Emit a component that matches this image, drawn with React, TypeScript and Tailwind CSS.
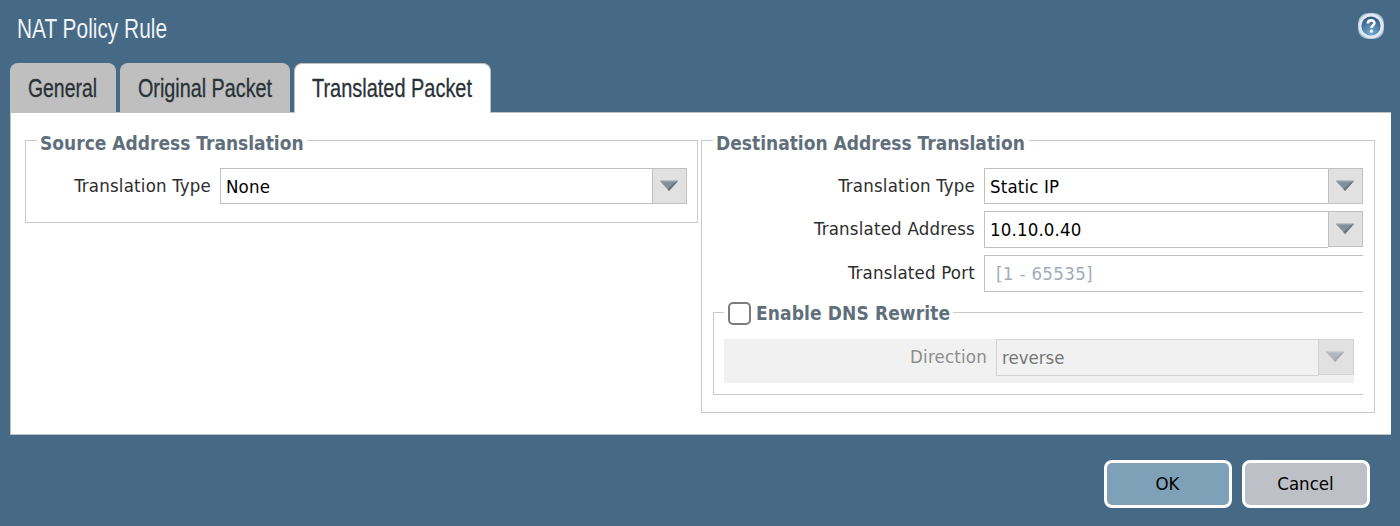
import type { ReactNode } from "react";

function Arrow({ disabled = false }: { disabled?: boolean }) {
  return (
    <svg width="20" height="12" viewBox="0 0 20 12" className={disabled ? "opacity-50" : ""}>
      <path d="M1 1h18l-9 10z" fill="#85919a" />
      <path d="M19 1l-9 10-1.5-2L17 1z" fill="#697680" />
      <path d="M1 1h18" stroke="#a0abb2" strokeWidth="1.2" />
    </svg>
  );
}

function Label({ children, className }: { children: ReactNode; className: string }) {
  return (
    <span className={`shrink-0 whitespace-nowrap text-right text-[18.5px] leading-[35px] tracking-[0.2px] ${className}`}>
      {children}
    </span>
  );
}

function Legend({ children, className }: { children: ReactNode; className: string }) {
  return (
    <legend className={`h-[21px] whitespace-nowrap pl-[3px] text-[19px] font-bold leading-[26px] text-[#5f6f7b] ${className}`}>
      {children}
    </legend>
  );
}

function Select({ value, height, disabled = false }: { value: string; height: string; disabled?: boolean }) {
  return (
    <div className={`flex min-w-0 flex-1 items-start ${height}`}>
      <div
        className={`h-full min-w-0 flex-1 border border-r-0 pl-[5px] text-[18.5px] leading-[36px] ${
          disabled ? "border-[#d2d2d2] text-[#767676]" : "border-[#c0c0c0] tracking-[0.15px] text-black"
        }`}
      >
        {value}
      </div>
      <div
        className={`flex h-9 shrink-0 items-center justify-center border bg-[#e1e1e1] ${
          disabled ? "w-9 border-[#d2d2d2] pr-0.5" : "w-[35px] border-[#c0c0c0] pr-px"
        }`}
      >
        <Arrow disabled={disabled} />
      </div>
    </div>
  );
}

function Tab({ label, width, textWidth, active = false }: { label: string; width: string; textWidth: string; active?: boolean }) {
  return (
    <div
      className={`flex shrink-0 items-center justify-center rounded-t-lg border border-b-0 border-[#c0c0c0] pr-px ${width} ${
        active ? "h-[50px] bg-white" : "h-[49px] bg-[#bfbfbf] pt-px"
      }`}
    >
      <svg height="34" className={`overflow-visible ${textWidth}`}>
        <text
          x="0"
          y="25"
          textLength="100%"
          lengthAdjust="spacingAndGlyphs"
          className="fill-[#293237] stroke-[#293237] stroke-[0.3px] font-['Liberation_Sans_Narrow','Liberation_Sans',sans-serif] text-[25.5px]"
        >
          {label}
        </text>
      </svg>
    </div>
  );
}

export default function App() {
  return (
    <div className="flex h-[526px] w-[1400px] flex-col overflow-hidden bg-[#466985] font-['DejaVu_Sans_Condensed','DejaVu_Sans',sans-serif] text-[#2d2d2d]">
      <header className="flex h-[63px] shrink-0 items-start justify-between pl-[17px] pr-4 pt-[13px]">
        <svg width="150" height="36" className="overflow-visible">
          <text
            x="0"
            y="25"
            textLength="150"
            lengthAdjust="spacingAndGlyphs"
            className="fill-[#f0f3f6] font-['Liberation_Sans_Narrow','Liberation_Sans',sans-serif] text-[27px]"
          >
            NAT Policy Rule
          </text>
        </svg>
        <svg width="26" height="26" viewBox="0 0 26 26" aria-label="Help">
          <defs>
            <radialGradient id="help" cx="50%" cy="85%" r="85%">
              <stop offset="0" stopColor="#78aed5" />
              <stop offset="1" stopColor="#285681" />
            </radialGradient>
          </defs>
          <rect width="26" height="26" rx="10" fill="#a9bdd3" />
          <circle cx="13" cy="13" r="12.5" fill="#e0e8f5" />
          <circle cx="13" cy="13" r="9.6" fill="url(#help)" />
          <path d="M9.8 10.4c0-4 6.6-4 6.6-.4 0 2.4-3 2.4-3 5M13.4 16.8v2.6" fill="none" stroke="#fff" strokeWidth="2.6" />
        </svg>
      </header>

      <nav className="z-10 -mb-px flex h-[50px] shrink-0 items-start gap-1 pl-[10px]">
        <Tab label="General" width="w-[106px]" textWidth="w-[69px]" />
        <Tab label="Original Packet" width="w-[170px]" textWidth="w-[134px]" />
        <Tab label="Translated Packet" width="w-[197px]" textWidth="w-[160px]" active />
      </nav>

      <main className="ml-[10px] flex h-[323px] w-[1381px] shrink-0 items-start gap-[3px] border border-r-0 border-[#c0c0c0] bg-white pl-[14px] pt-[17px]">
        <fieldset className="h-[93px] w-[673px] min-w-0 border border-[#c9c9c9] px-[10px]">
          <Legend className="ml-px w-[270px]">Source Address Translation</Legend>
          <div className="mt-[17px] flex gap-[9px]">
            <Label className="w-[175px]">Translation Type</Label>
            <Select value="None" height="h-9" />
          </div>
        </fieldset>

        <fieldset className="h-[283px] w-[674px] min-w-0 border border-[#c9c9c9] pl-[11px] pr-[11px]">
          <Legend className="w-[316px]">Destination Address Translation</Legend>
          <div className="mt-[17px] flex gap-[9px]">
            <Label className="w-[262px]">Translation Type</Label>
            <Select value="Static IP" height="h-9" />
          </div>
          <div className="mt-[7px] flex gap-[9px]">
            <Label className="w-[262px]">Translated Address</Label>
            <Select value="10.10.0.40" height="h-[37px]" />
          </div>
          <div className="mt-[7px] flex gap-[9px]">
            <Label className="w-[262px]">Translated Port</Label>
            <div className="h-[37px] flex-1 border border-r-0 border-[#c0c0c0] pl-[11px] text-[18.5px] leading-[36px] tracking-[0.35px] text-[#a0acb7]">
              [1 - 65535]
            </div>
          </div>

          <fieldset className="mt-[9px] h-[94px] min-w-0 border border-r-0 border-[#c9c9c9] pl-[10px] pr-[9px]">
            <legend className="flex h-[23px] w-[229px] items-center pl-1">
              <span className="relative top-px size-[23px] shrink-0 rounded-[5px] border-2 border-[#7c7c7c] bg-white" />
              <span className="ml-[5px] whitespace-nowrap pt-[2px] text-[19px] font-bold tracking-[0.1px] text-[#5f6f7b]">Enable DNS Rewrite</span>
            </legend>
            <div className="mt-[15px] flex h-11 gap-[9px] bg-[#f1f1f1]">
              <Label className="w-[263px] text-[#8d8d8d]">Direction</Label>
              <Select value="reverse" height="h-[37px]" disabled />
            </div>
          </fieldset>
        </fieldset>
      </main>

      <footer className="flex justify-end gap-[10px] pr-[30px] pt-[25px] text-[18.5px] text-black">
        <button className="h-12 w-32 rounded-lg border-[3px] border-white bg-[#7fa1b8] pr-px">OK</button>
        <button className="h-12 w-32 rounded-lg border-[3px] border-white bg-[#bdc0c6] pr-px">Cancel</button>
      </footer>
    </div>
  );
}
